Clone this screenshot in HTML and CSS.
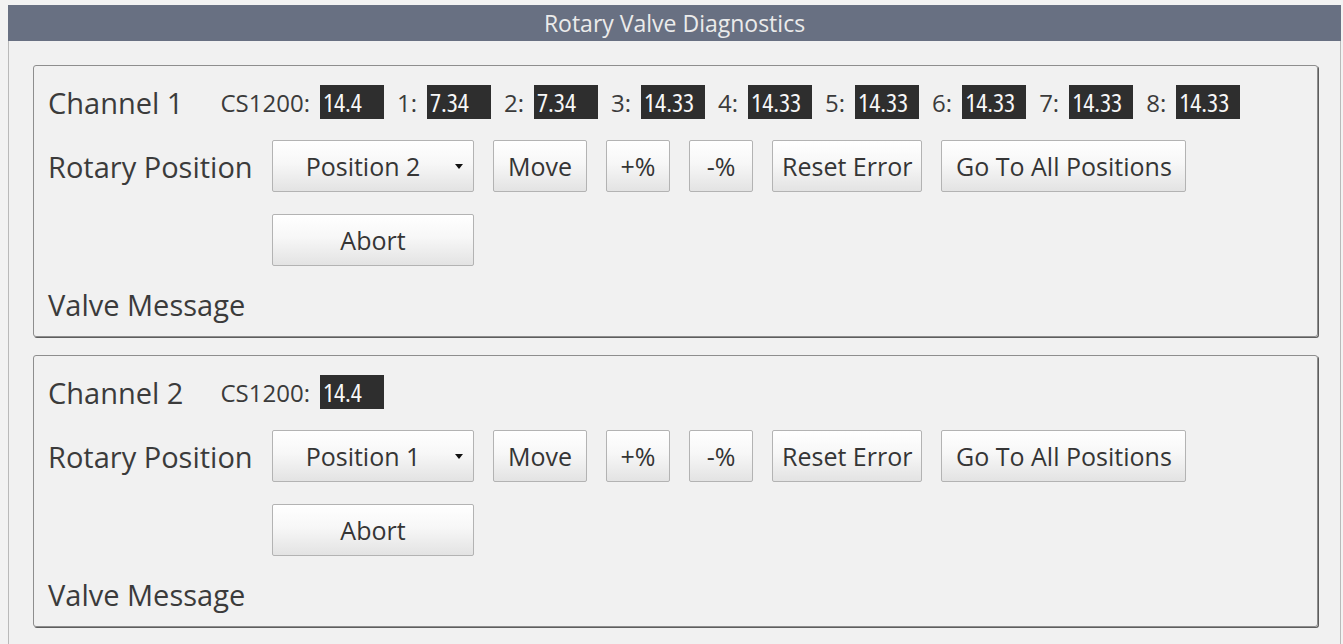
FILE: index.html
```html
<!DOCTYPE html>
<html lang="en">
<head>
<meta charset="utf-8">
<title>Rotary Valve Diagnostics</title>
<link rel="stylesheet" href="styles.css">
</head>
<body>
<div class="window">
  <div class="titlebar">Rotary Valve Diagnostics</div>
  <div class="content">
    <section class="group">
      <div class="readings">
        <span class="channel">Channel 1</span>
        <span class="reading"><span class="tag">CS1200:</span><span class="value">14.4</span></span>
        <span class="reading"><span class="tag">1:</span><span class="value">7.34</span></span>
        <span class="reading"><span class="tag">2:</span><span class="value">7.34</span></span>
        <span class="reading"><span class="tag">3:</span><span class="value">14.33</span></span>
        <span class="reading"><span class="tag">4:</span><span class="value">14.33</span></span>
        <span class="reading"><span class="tag">5:</span><span class="value">14.33</span></span>
        <span class="reading"><span class="tag">6:</span><span class="value">14.33</span></span>
        <span class="reading"><span class="tag">7:</span><span class="value">14.33</span></span>
        <span class="reading"><span class="tag">8:</span><span class="value">14.33</span></span>
      </div>
      <div class="controls">
        <span class="label">Rotary Position</span>
        <div class="actions">
          <div class="combo"><span class="combo-text">Position 2</span><span class="combo-arrow"></span></div>
          <button class="btn btn-move">Move</button>
          <button class="btn btn-step">+%</button>
          <button class="btn btn-step">-%</button>
          <button class="btn">Reset Error</button>
          <button class="btn btn-wide">Go To All Positions</button>
        </div>
      </div>
      <div class="controls controls-abort">
        <span class="label"></span>
        <div class="actions">
          <button class="btn btn-abort">Abort</button>
        </div>
      </div>
      <div class="message">Valve Message</div>
    </section>

    <section class="group">
      <div class="readings">
        <span class="channel">Channel 2</span>
        <span class="reading"><span class="tag">CS1200:</span><span class="value">14.4</span></span>
      </div>
      <div class="controls">
        <span class="label">Rotary Position</span>
        <div class="actions">
          <div class="combo"><span class="combo-text">Position 1</span><span class="combo-arrow"></span></div>
          <button class="btn btn-move">Move</button>
          <button class="btn btn-step">+%</button>
          <button class="btn btn-step">-%</button>
          <button class="btn">Reset Error</button>
          <button class="btn btn-wide">Go To All Positions</button>
        </div>
      </div>
      <div class="controls controls-abort">
        <span class="label"></span>
        <div class="actions">
          <button class="btn btn-abort">Abort</button>
        </div>
      </div>
      <div class="message">Valve Message</div>
    </section>
  </div>
</div>
</body>
</html>
```
FILE: styles.css
```css
html, body {
  margin: 0;
  padding: 0;
}

body {
  background: #f2f2f2;
  font-family: "Open Sans", "Noto Sans", sans-serif;
  color: #3b3b3b;
  overflow: hidden;
}

.window {
  margin: 5px 2px 0 8px;
  height: 700px;
  background: #f1f1f1;
  border-left: 1px solid #b9b9b9;
  border-right: 1px solid #b9b9b9;
}

.titlebar {
  height: 36px;
  margin: 0 -1px;
  background: #687082;
  color: #ebebeb;
  font-size: 23px;
  display: flex;
  align-items: center;
  justify-content: center;
}

.content {
  padding: 24px 22px 0 24px;
  display: flex;
  flex-direction: column;
  gap: 18px;
}

.group {
  height: 272px;
  box-sizing: border-box;
  border: 1px solid #8e8e8e;
  border-radius: 3px;
  box-shadow: 1px 1px 0 #5e5e5e;
  padding: 19px 14px 0 14px;
}

/* channel readings row */
.readings {
  display: flex;
  align-items: center;
  height: 34px;
  white-space: nowrap;
}

.channel {
  font-size: 29px;
  margin-right: 37px;
}

.reading {
  display: flex;
  align-items: center;
}

.reading + .reading {
  margin-left: 13px;
}

.tag {
  font-size: 24px;
  margin-right: 10px;
}

/* readout: narrow, tall digits */
.value {
  width: 64px;
  height: 34px;
  box-sizing: border-box;
  padding-left: 3px;
  background: #2e2e2e;
  color: #f7f7f7;
  font-size: 26px;
  font-stretch: 80%;
  line-height: 34px;
}

/* position controls */
.controls {
  display: flex;
  align-items: center;
  margin-top: 21px;
}

.controls-abort {
  margin-top: 22px;
}

.label {
  width: 224px;
  flex: 0 0 224px;
  font-size: 29px;
  white-space: nowrap;
}

.actions {
  display: flex;
  gap: 19px;
}

.btn,
.combo {
  height: 52px;
  box-sizing: border-box;
  border: 1px solid #b3b3b3;
  border-radius: 2px;
  background: linear-gradient(#ffffff, #f7f7f7 45%, #e3e3e3);
  color: #353535;
  font-family: inherit;
  font-size: 25px;
  white-space: nowrap;
}

.btn {
  min-width: 64px;
  padding: 0 9px;
}

.btn-move {
  width: 94px;
}

.btn-wide {
  width: 245px;
}

.btn-abort {
  width: 202px;
}

.combo {
  width: 202px;
  display: flex;
  align-items: center;
  padding-left: 6px;
}

.combo-text {
  flex: 1;
  text-align: center;
}

.combo-arrow {
  width: 0;
  height: 0;
  margin: 0 10px 0 8px;
  border-left: 4px solid transparent;
  border-right: 4px solid transparent;
  border-top: 5px solid #111;
}

.message {
  margin-top: 19px;
  font-size: 29px;
  line-height: 40px;
}
```
